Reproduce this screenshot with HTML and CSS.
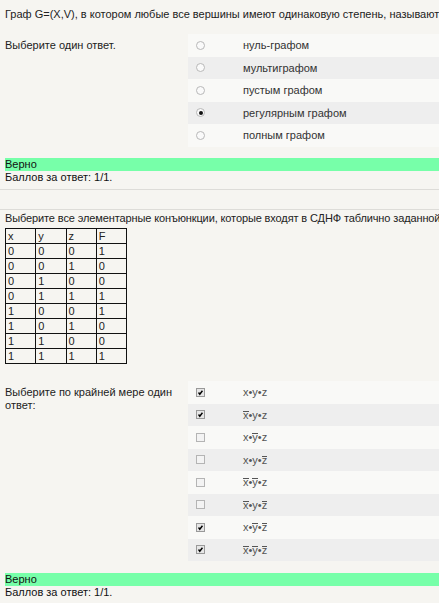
FILE: index.html
```html
<!DOCTYPE html>
<html lang="ru">
<head>
<meta charset="utf-8">
<title>Тест</title>
<link rel="stylesheet" href="styles.css">
</head>
<body>
<div class="que q1">
  <div class="qtext">Граф G=(X,V), в котором любые все вершины имеют одинаковую степень, называют</div>
  <div class="ablock">
    <div class="prompt">Выберите один ответ.</div>
    <div class="answer">
      <div class="row r0"><span class="radio"></span><span class="lbl">нуль-графом</span></div>
      <div class="row r1"><span class="radio"></span><span class="lbl">мультиграфом</span></div>
      <div class="row r0"><span class="radio"></span><span class="lbl">пустым графом</span></div>
      <div class="row r1"><span class="radio on"></span><span class="lbl">регулярным графом</span></div>
      <div class="row r0"><span class="radio"></span><span class="lbl">полным графом</span></div>
    </div>
  </div>
  <div class="outcome">
    <div class="correct">Верно</div>
    <div class="grade">Баллов за ответ: 1/1.</div>
  </div>
</div>
<div class="sep"></div>
<div class="sep sep2"></div>
<div class="que q2">
  <div class="qtext">Выберите все элементарные конъюнкции, которые входят в СДНФ таблично заданной функции</div>
  <table class="truth">
    <tr><td>x</td><td>y</td><td>z</td><td>F</td></tr>
    <tr><td>0</td><td>0</td><td>0</td><td>1</td></tr>
    <tr><td>0</td><td>0</td><td>1</td><td>0</td></tr>
    <tr><td>0</td><td>1</td><td>0</td><td>0</td></tr>
    <tr><td>0</td><td>1</td><td>1</td><td>1</td></tr>
    <tr><td>1</td><td>0</td><td>0</td><td>1</td></tr>
    <tr><td>1</td><td>0</td><td>1</td><td>0</td></tr>
    <tr><td>1</td><td>1</td><td>0</td><td>0</td></tr>
    <tr><td>1</td><td>1</td><td>1</td><td>1</td></tr>
  </table>
  <div class="ablock ab2">
    <div class="prompt">Выберите по крайней мере один ответ:</div>
    <div class="answer">
      <div class="row r0"><span class="check on"><svg viewBox="0 0 9 9"><path d="M2 4.5 L3.6 6.8 L7 2.2" /></svg></span><span class="lbl f">x•y•z</span></div>
      <div class="row r1"><span class="check on"><svg viewBox="0 0 9 9"><path d="M2 4.5 L3.6 6.8 L7 2.2" /></svg></span><span class="lbl f"><span class="ov">x</span>•y•z</span></div>
      <div class="row r0"><span class="check"></span><span class="lbl f">x•<span class="ov">y</span>•z</span></div>
      <div class="row r1"><span class="check"></span><span class="lbl f">x•y•<span class="ov">z</span></span></div>
      <div class="row r0"><span class="check"></span><span class="lbl f"><span class="ov">x</span>•<span class="ov">y</span>•z</span></div>
      <div class="row r1"><span class="check"></span><span class="lbl f"><span class="ov">x</span>•y•<span class="ov">z</span></span></div>
      <div class="row r0"><span class="check on"><svg viewBox="0 0 9 9"><path d="M2 4.5 L3.6 6.8 L7 2.2" /></svg></span><span class="lbl f">x•<span class="ov">y</span>•<span class="ov">z</span></span></div>
      <div class="row r1"><span class="check on"><svg viewBox="0 0 9 9"><path d="M2 4.5 L3.6 6.8 L7 2.2" /></svg></span><span class="lbl f"><span class="ov">x</span>•<span class="ov">y</span>•<span class="ov">z</span></span></div>
    </div>
  </div>
  <div class="outcome">
    <div class="correct">Верно</div>
    <div class="grade">Баллов за ответ: 1/1.</div>
  </div>
</div>
</body>
</html>
```
FILE: styles.css
```css
html, body {
  margin: 0;
  padding: 0;
}
body {
  background: #f6f5f1;
  font-family: "Liberation Sans", Arial, sans-serif;
  font-size: 11px;
  color: #222;
  width: 439px;
  overflow: hidden;
  padding-top: 7px;
}
.que {
  padding-left: 5px;
}
.qtext {
  line-height: 14px;
  white-space: nowrap;
  color: #222;
}
.q2 .qtext {
  margin-top: 1px;
  letter-spacing: -0.12px;
}
.ablock {
  display: flex;
  margin-top: 13px;
}
.prompt {
  width: 183px;
  padding-top: 5px;
  line-height: 13px;
  color: #222;
  box-sizing: border-box;
  padding-right: 12px;
}
.answer {
  flex: 1;
  margin-right: -5px;
}
.row {
  height: 22.5px;
  display: flex;
  align-items: center;
  padding-left: 8px;
}
.r0 { background: #f9f9f7; }
.r1 { background: #eeeeee; }
.lbl {
  margin-left: 38px;
  color: #333;
}
.lbl.f {
  color: #555;
}
.ov {
  display: inline-block;
  line-height: 7px;
  border-top: 1px solid #555;
}
.radio {
  width: 9px;
  height: 9px;
  box-sizing: border-box;
  border: 1px solid #b8b8b8;
  border-radius: 50%;
  background: #fafafa;
  display: inline-flex;
  align-items: center;
  justify-content: center;
}
.radio.on::after {
  content: "";
  width: 4px;
  height: 4px;
  border-radius: 50%;
  background: #111;
}
.check {
  width: 9px;
  height: 9px;
  box-sizing: border-box;
  border: 1px solid #b4b4b4;
  background: #f3f3f3;
  display: inline-flex;
}
.check.on {
  border-color: #999;
  background: #e6e6e6;
}
.check svg {
  width: 7px;
  height: 7px;
}
.check svg path {
  fill: none;
  stroke: #000;
  stroke-width: 1.8;
}
.outcome {
  margin-top: 11.5px;
  line-height: 13px;
  color: #111;
}
.correct {
  background: #77ffa9;
  margin-right: -5px;
}
.sep {
  margin-top: 5px;
  height: 1px;
  background: #dddcd8;
}
.sep2 {
  margin-top: 19px;
}
.truth {
  margin-top: 3px;
  border-collapse: collapse;
  table-layout: fixed;
  width: 122px;
  color: #222;
}
.truth td {
  border: 1px solid #111;
  padding: 0 0 0 2px;
  height: 14px;
  line-height: 14px;
  box-sizing: border-box;
}
.ab2 {
  margin-top: 17px;
}
.q2 .outcome {
  margin-top: 12px;
}
```
